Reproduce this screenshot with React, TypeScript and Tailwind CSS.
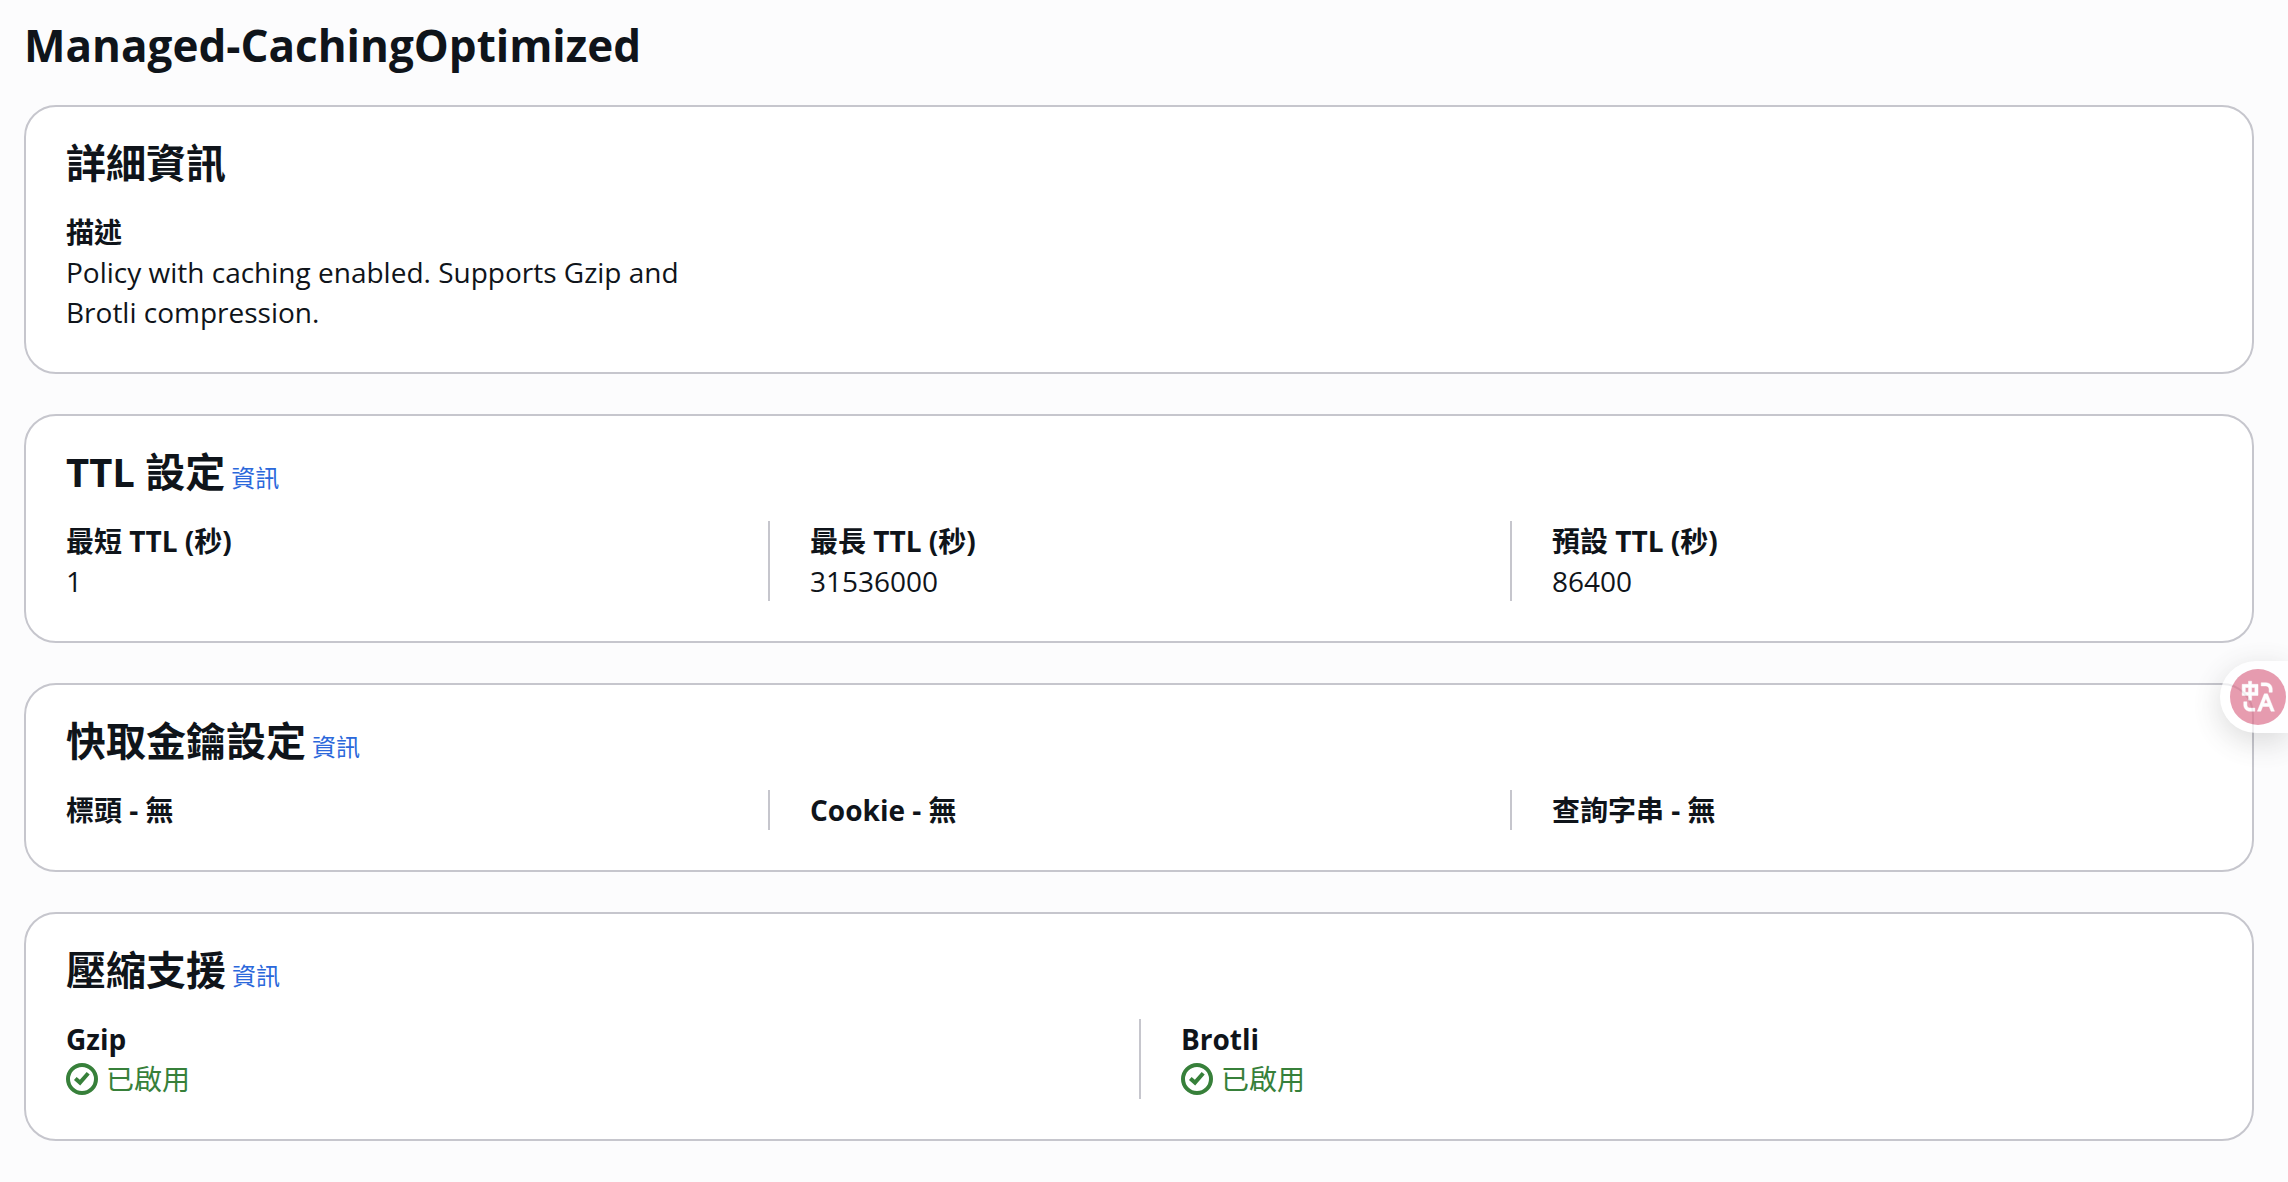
import type { ReactNode } from 'react';
import { RiTranslate } from 'react-icons/ri';

interface SectionProps {
  title: string;
  info?: boolean;
  children: ReactNode;
}

const Section = ({ title, info = false, children }: SectionProps) => {
  return (
    <section className="rounded-[32px] border-2 border-[#c6c6cd] bg-white pt-8 pb-10">
      <div className="mb-[25px] flex items-baseline gap-1.5 px-10">
        <h2 className="text-[40px] leading-12 font-bold">{title}</h2>
        {info && (
          <a href="#" className="text-2xl leading-8 text-[#2b68db] hover:underline">
            資訊
          </a>
        )}
      </div>
      {children}
    </section>
  );
};

interface FieldProps {
  label: string;
  first?: boolean;
  children?: ReactNode;
}

const Field = ({ label, first = false, children }: FieldProps) => {
  return (
    <div className={`px-10 ${first ? '' : 'border-l-2 border-[#c6c6cd]'}`}>
      <dt className="font-bold">{label}</dt>
      {children && <dd>{children}</dd>}
    </div>
  );
};

const Enabled = () => {
  return (
    <span className="flex items-center gap-2 text-[#37803a]">
      <svg viewBox="0 0 32 32" fill="none" stroke="currentColor" strokeWidth="4" className="size-8" aria-hidden="true">
        <circle cx="16" cy="16" r="14" />
        <path d="m9.3 15.4 4.7 4.2 8.2-9.4" />
      </svg>
      已啟用
    </span>
  );
};

export default function App() {
  return (
    <div className="min-h-screen bg-[#fcfcfd] pt-[15px] pr-[34px] pb-10 pl-6 font-['Open_Sans','Noto_Sans_CJK_TC',sans-serif] text-[28px] leading-10 text-[#0f141a]">
      <h1 className="mb-[30px] text-[44px] leading-[60px] font-bold">Managed-CachingOptimized</h1>
      <main className="flex flex-col gap-10">
        <Section title="詳細資訊">
          <dl className="grid grid-cols-3">
            <Field label="描述" first>
              Policy with caching enabled. Supports Gzip and Brotli compression.
            </Field>
          </dl>
        </Section>

        <Section title="TTL 設定" info>
          <dl className="grid grid-cols-3">
            <Field label="最短 TTL (秒)" first>1</Field>
            <Field label="最長 TTL (秒)">31536000</Field>
            <Field label="預設 TTL (秒)">86400</Field>
          </dl>
        </Section>

        <Section title="快取金鑰設定" info>
          <dl className="grid grid-cols-3">
            <Field label="標頭 - 無" first />
            <Field label="Cookie - 無" />
            <Field label="查詢字串 - 無" />
          </dl>
        </Section>

        <Section title="壓縮支援" info>
          <dl className="grid grid-cols-2">
            <Field label="Gzip" first>
              <Enabled />
            </Field>
            <Field label="Brotli">
              <Enabled />
            </Field>
          </dl>
        </Section>
      </main>

      <button
        aria-label="翻譯"
        className="fixed top-[661px] right-0 rounded-l-full bg-white py-2 pr-0.5 pl-2.5 opacity-70 shadow-[0_8px_32px_rgba(0,0,0,0.22)]"
      >
        <span className="flex size-14 items-center justify-center rounded-full bg-[#dd738e] text-white">
          <RiTranslate size={38} stroke="currentColor" strokeWidth={0.3} />
        </span>
      </button>
    </div>
  );
}
